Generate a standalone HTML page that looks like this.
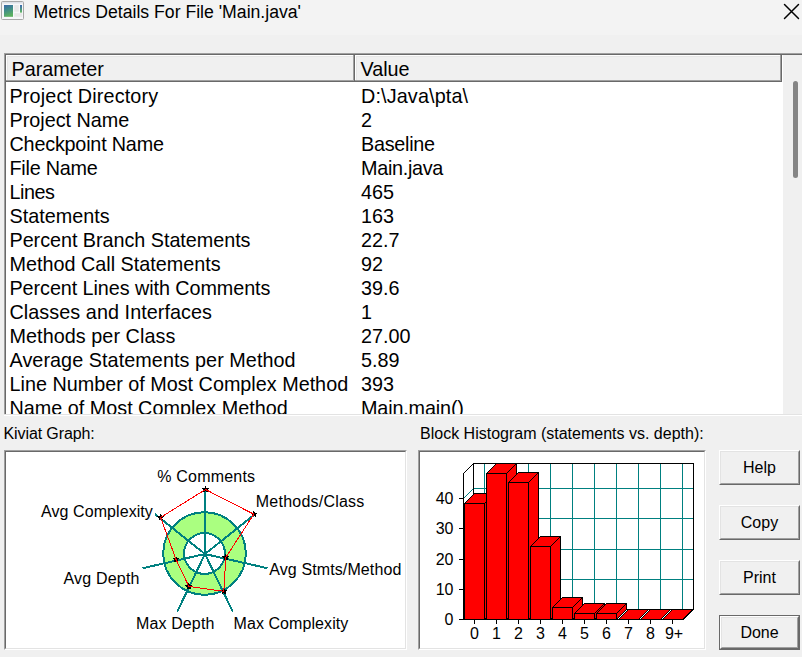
<!DOCTYPE html>
<html><head><meta charset="utf-8">
<style>
html,body{margin:0;padding:0;}
body{width:802px;height:657px;overflow:hidden;position:relative;background:#f0f0f0;font-family:"Liberation Sans",sans-serif;color:#000;}
.a{position:absolute;white-space:pre;}
#title{left:0;top:0;width:802px;height:35px;background:#f3f3f3;}
#ttext{left:33.5px;top:2px;font-size:17.65px;line-height:20px;color:#000;}
#list{left:4px;top:53px;width:798px;height:361px;background:#fff;overflow:hidden;}
.row{position:absolute;left:0;height:24px;font-size:19.8px;line-height:24px;}
.c1{position:absolute;left:5.5px;}
.c2{position:absolute;left:357px;}
.lbl{font-size:16px;line-height:18px;}
.btn{position:absolute;left:719px;width:81px;height:35px;box-sizing:border-box;background:#f0f0f0;
 border-top:1px solid #fff;border-left:1px solid #fff;border-right:1px solid #696969;border-bottom:1px solid #696969;}
.btn .in{position:absolute;left:0;top:0;right:0;bottom:0;border-right:1px solid #a0a0a0;border-bottom:1px solid #a0a0a0;border-top:1px solid #e3e3e3;border-left:1px solid #e3e3e3;}
.btn .t{position:absolute;left:0;right:0;top:8px;text-align:center;font-size:16px;line-height:18px;}
</style></head><body>
<div id="title" class="a"></div>
<!-- icon -->
<svg class="a" style="left:0;top:0" width="26" height="22" viewBox="0 0 26 22">
 <defs><linearGradient id="ig" x1="0" y1="0" x2="0.3" y2="1"><stop offset="0" stop-color="#3a68a8"/><stop offset="0.45" stop-color="#3f8a8a"/><stop offset="1" stop-color="#5cb060"/></linearGradient>
 <linearGradient id="ig2" x1="0" y1="0" x2="0" y2="1"><stop offset="0" stop-color="#3a68b0"/><stop offset="1" stop-color="#60b860"/></linearGradient></defs>
 <rect x="1.5" y="1.5" width="22" height="18" rx="1" fill="#f7f7f9" stroke="#a8a8a8"/>
 <rect x="2" y="2" width="21" height="1.5" fill="#dde1e8"/>
 <rect x="4" y="5" width="9" height="11.8" fill="url(#ig)"/>
 <rect x="14.2" y="5" width="4.6" height="6.7" fill="#e8e8e8"/>
 <rect x="14.2" y="13.2" width="7.9" height="3.6" fill="#e8e8e8"/>
 <rect x="20" y="5" width="2" height="7.6" fill="url(#ig2)"/>
</svg>
<div id="ttext" class="a">Metrics Details For File 'Main.java'</div>
<svg class="a" style="left:0;top:0" width="802" height="35">
 <path d="M784.5 4.5 L798.5 18.5 M798.5 4.5 L784.5 18.5" stroke="#000" stroke-width="1.45" stroke-linecap="round" fill="none"/>
</svg>

<!-- list -->
<div class="a" style="left:4px;top:53px;width:798px;height:361px;background:#fff;"></div>
<div class="a" style="left:4px;top:53px;width:798px;height:1px;background:#a0a0a0;"></div>
<div class="a" style="left:4px;top:53px;width:1px;height:361px;background:#a0a0a0;"></div>
<div class="a" style="left:5px;top:54px;width:797px;height:1px;background:#696969;"></div>
<div class="a" style="left:5px;top:54px;width:1px;height:360px;background:#696969;"></div>
<div class="a" style="left:4px;top:414px;width:798px;height:1px;background:#e3e3e3;"></div>
<div class="a" style="left:4px;top:415px;width:798px;height:1px;background:#fff;"></div>
<!-- header -->
<div class="a" style="left:6px;top:55px;width:349px;height:27px;background:#f0f0f0;box-sizing:border-box;border-top:1px solid #fff;border-left:1px solid #fff;"></div>
<div class="a" style="left:6px;top:80px;width:349px;height:1px;background:#a0a0a0;"></div>
<div class="a" style="left:6px;top:81px;width:349px;height:1px;background:#696969;"></div>
<div class="a" style="left:353px;top:55px;width:1px;height:26px;background:#a0a0a0;"></div>
<div class="a" style="left:354px;top:55px;width:1px;height:27px;background:#696969;"></div>
<div class="a" style="left:355px;top:55px;width:427px;height:27px;background:#f0f0f0;box-sizing:border-box;border-top:1px solid #fff;border-left:1px solid #fff;"></div>
<div class="a" style="left:355px;top:80px;width:427px;height:1px;background:#a0a0a0;"></div>
<div class="a" style="left:355px;top:81px;width:427px;height:1px;background:#696969;"></div>
<div class="a" style="left:780px;top:55px;width:1px;height:26px;background:#a0a0a0;"></div>
<div class="a" style="left:781px;top:55px;width:1px;height:27px;background:#696969;"></div>
<div class="a" style="left:7px;top:56px;width:346px;height:1px;background:#e6e6e6;"></div><div class="a" style="left:7px;top:56px;width:1px;height:24px;background:#e6e6e6;"></div><div class="a" style="left:356px;top:56px;width:424px;height:1px;background:#e6e6e6;"></div><div class="a" style="left:356px;top:56px;width:1px;height:24px;background:#e6e6e6;"></div>
<div class="a" style="left:11.5px;top:57px;font-size:19.8px;line-height:24px;">Parameter</div>
<div class="a" style="left:360.5px;top:57px;font-size:19.8px;line-height:24px;">Value</div>
<!-- scrollbar -->
<div class="a" style="left:783px;top:55px;width:19px;height:359px;background:#f0f0f0;"></div>
<div class="a" style="left:793px;top:81px;width:5px;height:97px;background:#858585;border-radius:3px;"></div>
<!-- rows -->
<div class="a" style="left:4px;top:82px;width:779px;height:332px;overflow:hidden;">
<div class="row" style="top:2px"><span class="c1" style="letter-spacing:0.15px">Project Directory</span><span class="c2" style="letter-spacing:0.136px">D:\Java\pta\</span></div>
<div class="row" style="top:26px"><span class="c1">Project Name</span><span class="c2">2</span></div>
<div class="row" style="top:50px"><span class="c1" style="letter-spacing:-0.2px">Checkpoint Name</span><span class="c2" style="letter-spacing:-0.27px">Baseline</span></div>
<div class="row" style="top:74px"><span class="c1" style="letter-spacing:-0.225px">File Name</span><span class="c2" style="letter-spacing:-0.29px">Main.java</span></div>
<div class="row" style="top:98px"><span class="c1" style="letter-spacing:-0.45px">Lines</span><span class="c2">465</span></div>
<div class="row" style="top:122px"><span class="c1">Statements</span><span class="c2">163</span></div>
<div class="row" style="top:146px"><span class="c1" style="letter-spacing:-0.037px">Percent Branch Statements</span><span class="c2">22.7</span></div>
<div class="row" style="top:170px"><span class="c1">Method Call Statements</span><span class="c2">92</span></div>
<div class="row" style="top:194px"><span class="c1" style="letter-spacing:-0.07px">Percent Lines with Comments</span><span class="c2">39.6</span></div>
<div class="row" style="top:218px"><span class="c1" style="letter-spacing:0.062px">Classes and Interfaces</span><span class="c2">1</span></div>
<div class="row" style="top:242px"><span class="c1" style="letter-spacing:0.056px">Methods per Class</span><span class="c2">27.00</span></div>
<div class="row" style="top:266px"><span class="c1" style="letter-spacing:0.06px">Average Statements per Method</span><span class="c2">5.89</span></div>
<div class="row" style="top:290px"><span class="c1">Line Number of Most Complex Method</span><span class="c2">393</span></div>
<div class="row" style="top:314px"><span class="c1">Name of Most Complex Method</span><span class="c2" style="letter-spacing:-0.15px">Main.main()</span></div>
</div>

<!-- labels -->
<div class="a lbl" style="left:3.5px;top:425px;letter-spacing:-0.1px;">Kiviat Graph:</div>
<div class="a lbl" style="left:420px;top:425px;">Block Histogram (statements vs. depth):</div>

<!-- boxes -->
<div class="a" style="left:4px;top:450px;width:403px;height:200px;box-sizing:border-box;background:#fff;border-top:1px solid #a0a0a0;border-left:1px solid #a0a0a0;border-right:1px solid #fff;border-bottom:1px solid #fff;">
 <div style="position:absolute;left:0;top:0;right:0;bottom:0;border-top:1px solid #696969;border-left:1px solid #696969;border-right:1px solid #e3e3e3;border-bottom:1px solid #e3e3e3;"></div>
</div>
<div class="a" style="left:418px;top:450px;width:288px;height:200px;box-sizing:border-box;background:#fff;border-top:1px solid #a0a0a0;border-left:1px solid #a0a0a0;border-right:1px solid #fff;border-bottom:1px solid #fff;">
 <div style="position:absolute;left:0;top:0;right:0;bottom:0;border-top:1px solid #696969;border-left:1px solid #696969;border-right:1px solid #e3e3e3;border-bottom:1px solid #e3e3e3;"></div>
</div>

<!-- CHARTS -->
<svg class="a" style="left:0;top:0" width="802" height="657" font-family="Liberation Sans" font-size="16">
<g shape-rendering="crispEdges"><circle cx="204.5" cy="553.5" r="41.3" fill="#aaff80" stroke="#008080" stroke-width="2"/>
<circle cx="204.5" cy="553.5" r="20.4" fill="#fff" stroke="#008080" stroke-width="2"/>
<line x1="205.0" y1="554.0" x2="205.00" y2="490.00" stroke="#008080" stroke-width="2"/>
<line x1="205.0" y1="554.0" x2="255.04" y2="514.10" stroke="#008080" stroke-width="2"/>
<line x1="205.0" y1="554.0" x2="267.40" y2="568.24" stroke="#008080" stroke-width="2"/>
<line x1="205.0" y1="554.0" x2="232.77" y2="611.66" stroke="#008080" stroke-width="2"/>
<line x1="205.0" y1="554.0" x2="177.23" y2="611.66" stroke="#008080" stroke-width="2"/>
<line x1="205.0" y1="554.0" x2="142.60" y2="568.24" stroke="#008080" stroke-width="2"/>
<line x1="205.0" y1="554.0" x2="154.96" y2="514.10" stroke="#008080" stroke-width="2"/>
<polygon points="205.50,485.70 206.62,487.96 209.11,488.33 207.31,490.09 207.73,492.57 205.50,491.40 203.27,492.57 203.69,490.09 201.89,488.33 204.38,487.96" fill="#000"/>
<polygon points="253.80,510.40 254.92,512.66 257.41,513.03 255.61,514.79 256.03,517.27 253.80,516.10 251.57,517.27 251.99,514.79 250.19,513.03 252.68,512.66" fill="#000"/>
<polygon points="225.80,553.60 226.92,555.86 229.41,556.23 227.61,557.99 228.03,560.47 225.80,559.30 223.57,560.47 223.99,557.99 222.19,556.23 224.68,555.86" fill="#000"/>
<polygon points="223.80,587.50 224.92,589.76 227.41,590.13 225.61,591.89 226.03,594.37 223.80,593.20 221.57,594.37 221.99,591.89 220.19,590.13 222.68,589.76" fill="#000"/>
<polygon points="188.90,582.70 190.02,584.96 192.51,585.33 190.71,587.09 191.13,589.57 188.90,588.40 186.67,589.57 187.09,587.09 185.29,585.33 187.78,584.96" fill="#000"/>
<polygon points="176.00,555.60 177.12,557.86 179.61,558.23 177.81,559.99 178.23,562.47 176.00,561.30 173.77,562.47 174.19,559.99 172.39,558.23 174.88,557.86" fill="#000"/>
<polygon points="160.60,513.60 161.72,515.86 164.21,516.23 162.41,517.99 162.83,520.47 160.60,519.30 158.37,520.47 158.79,517.99 156.99,516.23 159.48,515.86" fill="#000"/>
<polygon points="205.50,489.50 253.80,514.20 225.80,557.40 223.80,591.30 188.90,586.50 176.00,559.40 160.60,517.40" fill="none" stroke="#f00" stroke-width="1"/>
<text x="157.30" y="482" textLength="97.73" lengthAdjust="spacing">% Comments</text>
<text x="255.80" y="506.6" textLength="108.53" lengthAdjust="spacing">Methods/Class</text>
<text x="41.00" y="517" textLength="111.86" lengthAdjust="spacing">Avg Complexity</text>
<text x="269.20" y="574.7" textLength="132.14" lengthAdjust="spacing">Avg Stmts/Method</text>
<text x="63.50" y="583.7" textLength="75.92" lengthAdjust="spacing">Avg Depth</text>
<text x="136.00" y="628.5" textLength="78.38" lengthAdjust="spacing">Max Depth</text>
<text x="233.50" y="628.5" textLength="114.81" lengthAdjust="spacing">Max Complexity</text>
<line x1="473.5" y1="488.5" x2="693.5" y2="488.5" stroke="#008080" stroke-width="1"/>
<line x1="463.5" y1="498.5" x2="473.5" y2="488.5" stroke="#008080" stroke-width="1"/>
<line x1="473.5" y1="518.5" x2="693.5" y2="518.5" stroke="#008080" stroke-width="1"/>
<line x1="463.5" y1="528.5" x2="473.5" y2="518.5" stroke="#008080" stroke-width="1"/>
<line x1="473.5" y1="549.5" x2="693.5" y2="549.5" stroke="#008080" stroke-width="1"/>
<line x1="463.5" y1="559.5" x2="473.5" y2="549.5" stroke="#008080" stroke-width="1"/>
<line x1="473.5" y1="579.5" x2="693.5" y2="579.5" stroke="#008080" stroke-width="1"/>
<line x1="463.5" y1="589.5" x2="473.5" y2="579.5" stroke="#008080" stroke-width="1"/>
<line x1="484.5" y1="463.5" x2="484.5" y2="609.5" stroke="#008080" stroke-width="1"/>
<line x1="506.5" y1="463.5" x2="506.5" y2="609.5" stroke="#008080" stroke-width="1"/>
<line x1="528.5" y1="463.5" x2="528.5" y2="609.5" stroke="#008080" stroke-width="1"/>
<line x1="550.5" y1="463.5" x2="550.5" y2="609.5" stroke="#008080" stroke-width="1"/>
<line x1="572.5" y1="463.5" x2="572.5" y2="609.5" stroke="#008080" stroke-width="1"/>
<line x1="594.5" y1="463.5" x2="594.5" y2="609.5" stroke="#008080" stroke-width="1"/>
<line x1="616.5" y1="463.5" x2="616.5" y2="609.5" stroke="#008080" stroke-width="1"/>
<line x1="638.5" y1="463.5" x2="638.5" y2="609.5" stroke="#008080" stroke-width="1"/>
<line x1="660.5" y1="463.5" x2="660.5" y2="609.5" stroke="#008080" stroke-width="1"/>
<line x1="682.5" y1="463.5" x2="682.5" y2="609.5" stroke="#008080" stroke-width="1"/>
<polyline points="463.5,619.5 463.5,473.5 473.5,463.5 693.5,463.5 693.5,609.5 683.5,619.5 459,619.5" fill="none" stroke="#000" stroke-width="1"/>
<line x1="473.5" y1="463.5" x2="473.5" y2="609.5" stroke="#000" stroke-width="1"/>
<line x1="473.5" y1="609.5" x2="693.5" y2="609.5" stroke="#000" stroke-width="1"/>
<line x1="459" y1="619.5" x2="463.5" y2="619.5" stroke="#000" stroke-width="1"/>
<text x="453.5" y="625" text-anchor="end">0</text>
<line x1="459" y1="589.5" x2="463.5" y2="589.5" stroke="#000" stroke-width="1"/>
<text x="453.5" y="595" text-anchor="end">10</text>
<line x1="459" y1="559.5" x2="463.5" y2="559.5" stroke="#000" stroke-width="1"/>
<text x="453.5" y="565" text-anchor="end">20</text>
<line x1="459" y1="528.5" x2="463.5" y2="528.5" stroke="#000" stroke-width="1"/>
<text x="453.5" y="534" text-anchor="end">30</text>
<line x1="459" y1="498.5" x2="463.5" y2="498.5" stroke="#000" stroke-width="1"/>
<text x="453.5" y="504" text-anchor="end">40</text>
<polygon points="464.5,503.5 474.5,493.5 494.5,493.5 484.5,503.5" fill="#f00" stroke="#000" stroke-width="1" stroke-linejoin="miter"/>
<polygon points="484.5,503.5 494.5,493.5 494.5,609.5 484.5,619.5" fill="#f00" stroke="#000" stroke-width="1"/>
<rect x="464.5" y="503.5" width="20" height="116.0" fill="#f00" stroke="#000" stroke-width="1"/>
<polygon points="486.5,473.5 496.5,463.5 516.5,463.5 506.5,473.5" fill="#f00" stroke="#000" stroke-width="1" stroke-linejoin="miter"/>
<polygon points="506.5,473.5 516.5,463.5 516.5,609.5 506.5,619.5" fill="#f00" stroke="#000" stroke-width="1"/>
<rect x="486.5" y="473.5" width="20" height="146.0" fill="#f00" stroke="#000" stroke-width="1"/>
<polygon points="508.5,482.5 518.5,472.5 538.5,472.5 528.5,482.5" fill="#f00" stroke="#000" stroke-width="1" stroke-linejoin="miter"/>
<polygon points="528.5,482.5 538.5,472.5 538.5,609.5 528.5,619.5" fill="#f00" stroke="#000" stroke-width="1"/>
<rect x="508.5" y="482.5" width="20" height="137.0" fill="#f00" stroke="#000" stroke-width="1"/>
<polygon points="530.5,546.5 540.5,536.5 560.5,536.5 550.5,546.5" fill="#f00" stroke="#000" stroke-width="1" stroke-linejoin="miter"/>
<polygon points="550.5,546.5 560.5,536.5 560.5,609.5 550.5,619.5" fill="#f00" stroke="#000" stroke-width="1"/>
<rect x="530.5" y="546.5" width="20" height="73.0" fill="#f00" stroke="#000" stroke-width="1"/>
<polygon points="552.5,607.5 562.5,597.5 582.5,597.5 572.5,607.5" fill="#f00" stroke="#000" stroke-width="1" stroke-linejoin="miter"/>
<polygon points="572.5,607.5 582.5,597.5 582.5,609.5 572.5,619.5" fill="#f00" stroke="#000" stroke-width="1"/>
<rect x="552.5" y="607.5" width="20" height="12.0" fill="#f00" stroke="#000" stroke-width="1"/>
<polygon points="574.5,613.5 584.5,603.5 604.5,603.5 594.5,613.5" fill="#f00" stroke="#000" stroke-width="1" stroke-linejoin="miter"/>
<polygon points="594.5,613.5 604.5,603.5 604.5,609.5 594.5,619.5" fill="#f00" stroke="#000" stroke-width="1"/>
<rect x="574.5" y="613.5" width="20" height="6.0" fill="#f00" stroke="#000" stroke-width="1"/>
<polygon points="596.5,613.5 606.5,603.5 626.5,603.5 616.5,613.5" fill="#f00" stroke="#000" stroke-width="1" stroke-linejoin="miter"/>
<polygon points="616.5,613.5 626.5,603.5 626.5,609.5 616.5,619.5" fill="#f00" stroke="#000" stroke-width="1"/>
<rect x="596.5" y="613.5" width="20" height="6.0" fill="#f00" stroke="#000" stroke-width="1"/>
<polygon points="618.5,619.5 628.5,609.5 648.5,609.5 638.5,619.5" fill="#f00" stroke="#000" stroke-width="1"/>
<polygon points="640.5,619.5 650.5,609.5 670.5,609.5 660.5,619.5" fill="#f00" stroke="#000" stroke-width="1"/>
<polygon points="662.5,619.5 672.5,609.5 692.5,609.5 682.5,619.5" fill="#f00" stroke="#000" stroke-width="1"/>
<line x1="474.5" y1="619.5" x2="474.5" y2="623.5" stroke="#000" stroke-width="1"/>
<text x="474.5" y="638.5" text-anchor="middle">0</text>
<line x1="496.5" y1="619.5" x2="496.5" y2="623.5" stroke="#000" stroke-width="1"/>
<text x="496.5" y="638.5" text-anchor="middle">1</text>
<line x1="518.5" y1="619.5" x2="518.5" y2="623.5" stroke="#000" stroke-width="1"/>
<text x="518.5" y="638.5" text-anchor="middle">2</text>
<line x1="540.5" y1="619.5" x2="540.5" y2="623.5" stroke="#000" stroke-width="1"/>
<text x="540.5" y="638.5" text-anchor="middle">3</text>
<line x1="562.5" y1="619.5" x2="562.5" y2="623.5" stroke="#000" stroke-width="1"/>
<text x="562.5" y="638.5" text-anchor="middle">4</text>
<line x1="584.5" y1="619.5" x2="584.5" y2="623.5" stroke="#000" stroke-width="1"/>
<text x="584.5" y="638.5" text-anchor="middle">5</text>
<line x1="606.5" y1="619.5" x2="606.5" y2="623.5" stroke="#000" stroke-width="1"/>
<text x="606.5" y="638.5" text-anchor="middle">6</text>
<line x1="628.5" y1="619.5" x2="628.5" y2="623.5" stroke="#000" stroke-width="1"/>
<text x="628.5" y="638.5" text-anchor="middle">7</text>
<line x1="650.5" y1="619.5" x2="650.5" y2="623.5" stroke="#000" stroke-width="1"/>
<text x="650.5" y="638.5" text-anchor="middle">8</text>
<line x1="672.5" y1="619.5" x2="672.5" y2="623.5" stroke="#000" stroke-width="1"/>
<text x="674.0" y="638.5" text-anchor="middle">9+</text>
</g></svg>

<!-- buttons -->
<div class="btn" style="top:450px"><div class="in"></div><div class="t">Help</div></div>
<div class="btn" style="top:505px"><div class="in"></div><div class="t">Copy</div></div>
<div class="btn" style="top:560px"><div class="in"></div><div class="t">Print</div></div>
<div class="btn" style="top:615px;border:1px solid #696969;"><div class="in" style="border-top:1px solid #fff;border-left:1px solid #fff;border-right:1px solid #696969;border-bottom:1px solid #696969;"><div style="position:absolute;left:0;top:0;right:0;bottom:0;border-right:1px solid #a0a0a0;border-bottom:1px solid #a0a0a0;border-top:1px solid #e3e3e3;border-left:1px solid #e3e3e3;"></div></div><div class="t" style="top:8px">Done</div></div>
</body></html>
